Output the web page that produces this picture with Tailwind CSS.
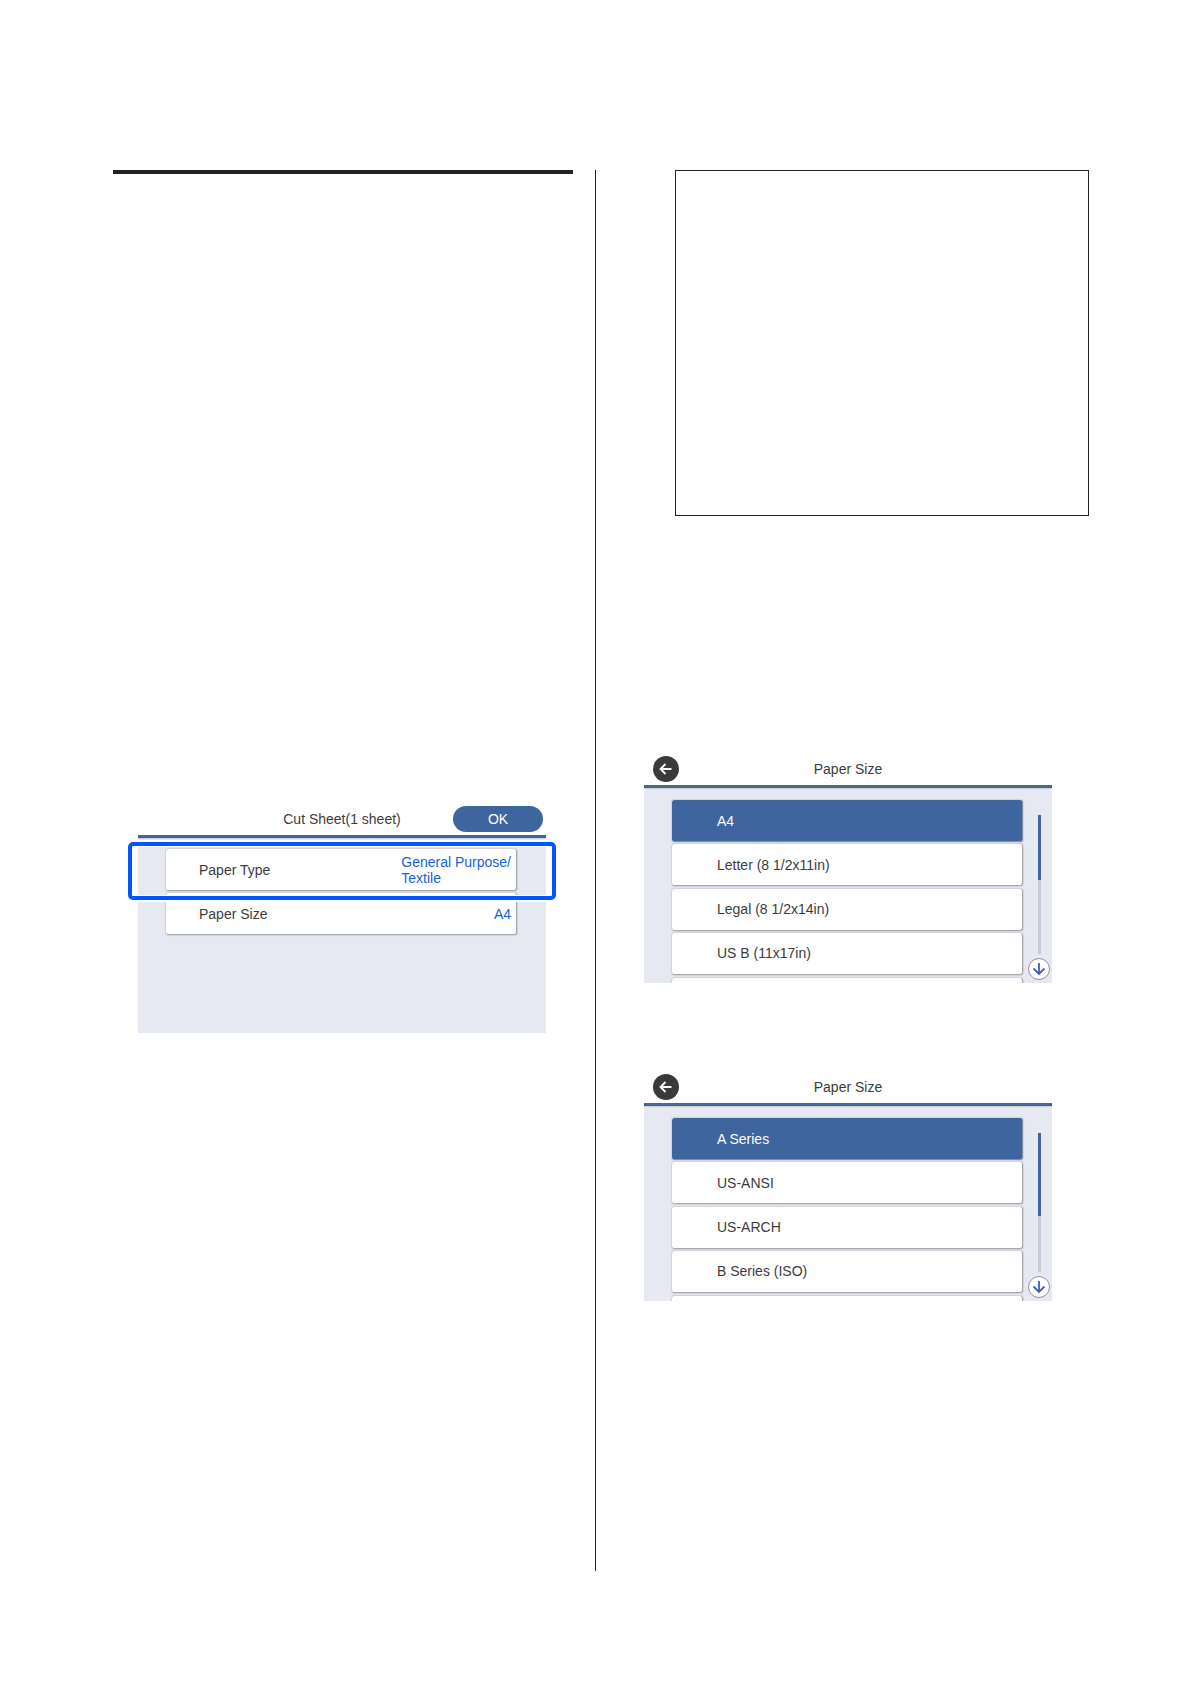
<!DOCTYPE html>
<html lang="en">
<head>
  <meta charset="UTF-8" />
  <meta name="viewport" content="width=device-width, initial-scale=1.0" />
  <title>Paper Settings</title>
  <script src="https://cdn.jsdelivr.net/npm/@tailwindcss/browser@4"></script>
</head>
<body class="bg-white text-sm text-[#3c3c3c] font-['Liberation_Sans',Arial,sans-serif]">
  <main class="grid min-h-screen grid-cols-2 pt-[170px] pb-[113px]">

    <!-- Left column -->
    <div class="pl-[113px] pr-[22px]">
      <hr class="border-t-4 border-[#222]" />

      <section class="mt-[631px] ml-[25px] max-w-[408px]">
        <header class="grid h-[30px] grid-cols-[93px_1fr_93px] items-start pt-px">
          <h2 class="col-start-2 pt-[3px] text-center leading-5">Cut Sheet(1 sheet)</h2>
          <button class="mr-[3px] h-[26px] rounded-full bg-[#3e659e] text-white">OK</button>
        </header>
        <div class="relative h-[198px] border-t-3 border-[#4a6694] bg-[#e6e9f1] pt-[11px] pl-7 pr-[29px] shadow-[inset_0_1px_0_#c9cdd8]">
          <div class="flex flex-col gap-[2px]">
            <button class="flex h-[42px] items-center justify-between rounded-[3px] border-r border-b border-[#a6a8ac] bg-white pl-[33px] pr-[5px] text-left shadow-[0_0_1px_1px_#d0d3d9]">
              <span>Paper Type</span>
              <span class="leading-4 text-[#1a5fe0]">General Purpose/<br />Textile</span>
            </button>
            <button class="flex h-[42px] items-center justify-between rounded-[3px] border-r border-b border-[#a6a8ac] bg-white pl-[33px] pr-[5px] text-left shadow-[0_0_1px_1px_#d0d3d9]">
              <span>Paper Size</span>
              <span class="text-[#1a5fe0]">A4</span>
            </button>
          </div>
          <!-- Highlight frame around Paper Type -->
          <div class="pointer-events-none absolute -inset-x-[10px] top-1 h-[58px] rounded-[5px] border-4 border-[#0055ff] shadow-[0_0_0_2px_#fff,inset_0_0_0_1px_#fff]"></div>
        </div>
      </section>
    </div>

    <!-- Right column -->
    <div class="border-l border-[#222] pr-[101px]">
      <div class="ml-[79px] h-[346px] border border-[#222]"></div>

      <section class="mt-[239px] ml-12 max-w-[408px]">
        <header class="grid h-[30px] grid-cols-[93px_1fr_93px] items-start pt-px">
          <button class="ml-[9px] size-[26px] rounded-full bg-[#3a3a3a] text-white" aria-label="Back">
            <svg class="size-[26px]" viewBox="0 0 26 26" fill="none" stroke="currentColor" stroke-width="1.8"><path d="M18.500 13H8M12.500 8L7.500 13l5 5" /></svg>
          </button>
          <h2 class="pt-[3px] text-center leading-5">Paper Size</h2>
        </header>
        <div class="flex h-[198px] justify-between overflow-hidden border-t-3 border-[#4a6694] bg-[#e6e9f1] pt-3 pl-7 pr-[2px] shadow-[inset_0_1px_0_#c9cdd8]">
          <div class="flex grow flex-col gap-[3px]">
            <ul class="flex h-[175px] shrink-0 flex-col justify-between">
              <li><button class="block h-[42px] w-full rounded-[3px] border-r border-b border-[#7f90ae] bg-[#3e659e] pl-[45px] text-left text-white shadow-[0_0_1px_1px_#d0d3d9]">A4</button></li>
              <li><button class="block h-[42px] w-full rounded-[3px] border-r border-b border-[#a6a8ac] bg-white pl-[45px] text-left shadow-[0_0_1px_1px_#d0d3d9]">Letter (8 1/2x11in)</button></li>
              <li><button class="block h-[42px] w-full rounded-[3px] border-r border-b border-[#a6a8ac] bg-white pl-[45px] text-left shadow-[0_0_1px_1px_#d0d3d9]">Legal (8 1/2x14in)</button></li>
              <li><button class="block h-[42px] w-full rounded-[3px] border-r border-b border-[#a6a8ac] bg-white pl-[45px] text-left shadow-[0_0_1px_1px_#d0d3d9]">US B (11x17in)</button></li>
            </ul>
            <div class="h-[42px] shrink-0 rounded-[3px] border-r border-[#a6a8ac] bg-white shadow-[0_0_1px_1px_#d0d3d9]"></div>
          </div>
          <div class="ml-[5px] flex w-[22px] shrink-0 flex-col items-center gap-1 pt-[15px]">
            <div class="h-[139px] w-[3px] bg-[#c9ccd4]">
              <div class="h-[65px] bg-[#3e659e]"></div>
            </div>
            <button class="size-[22px] shrink-0 rounded-full border border-[#8f9296] bg-white text-[#3f5fae]" aria-label="Scroll down">
              <svg class="size-5" viewBox="0 0 20 20" fill="none" stroke="currentColor" stroke-width="1.8"><path d="M10 4v11M4.500 9.500L10 15l5.500-5.500" /></svg>
            </button>
          </div>
        </div>
      </section>

      <section class="mt-[90px] ml-12 max-w-[408px]">
        <header class="grid h-[30px] grid-cols-[93px_1fr_93px] items-start pt-px">
          <button class="ml-[9px] size-[26px] rounded-full bg-[#3a3a3a] text-white" aria-label="Back">
            <svg class="size-[26px]" viewBox="0 0 26 26" fill="none" stroke="currentColor" stroke-width="1.8"><path d="M18.500 13H8M12.500 8L7.500 13l5 5" /></svg>
          </button>
          <h2 class="pt-[3px] text-center leading-5">Paper Size</h2>
        </header>
        <div class="flex h-[198px] justify-between overflow-hidden border-t-3 border-[#4a6694] bg-[#e6e9f1] pt-3 pl-7 pr-[2px] shadow-[inset_0_1px_0_#c9cdd8]">
          <div class="flex grow flex-col gap-[3px]">
            <ul class="flex h-[175px] shrink-0 flex-col justify-between">
              <li><button class="block h-[42px] w-full rounded-[3px] border-r border-b border-[#7f90ae] bg-[#3e659e] pl-[45px] text-left text-white shadow-[0_0_1px_1px_#d0d3d9]">A Series</button></li>
              <li><button class="block h-[42px] w-full rounded-[3px] border-r border-b border-[#a6a8ac] bg-white pl-[45px] text-left shadow-[0_0_1px_1px_#d0d3d9]">US-ANSI</button></li>
              <li><button class="block h-[42px] w-full rounded-[3px] border-r border-b border-[#a6a8ac] bg-white pl-[45px] text-left shadow-[0_0_1px_1px_#d0d3d9]">US-ARCH</button></li>
              <li><button class="block h-[42px] w-full rounded-[3px] border-r border-b border-[#a6a8ac] bg-white pl-[45px] text-left shadow-[0_0_1px_1px_#d0d3d9]">B Series (ISO)</button></li>
            </ul>
            <div class="h-[42px] shrink-0 rounded-[3px] border-r border-[#a6a8ac] bg-white shadow-[0_0_1px_1px_#d0d3d9]"></div>
          </div>
          <div class="ml-[5px] flex w-[22px] shrink-0 flex-col items-center gap-1 pt-[15px]">
            <div class="h-[139px] w-[3px] bg-[#c9ccd4]">
              <div class="h-[83px] bg-[#3e659e]"></div>
            </div>
            <button class="size-[22px] shrink-0 rounded-full border border-[#8f9296] bg-white text-[#3f5fae]" aria-label="Scroll down">
              <svg class="size-5" viewBox="0 0 20 20" fill="none" stroke="currentColor" stroke-width="1.8"><path d="M10 4v11M4.500 9.500L10 15l5.500-5.500" /></svg>
            </button>
          </div>
        </div>
      </section>
    </div>

  </main>
</body>
</html>
